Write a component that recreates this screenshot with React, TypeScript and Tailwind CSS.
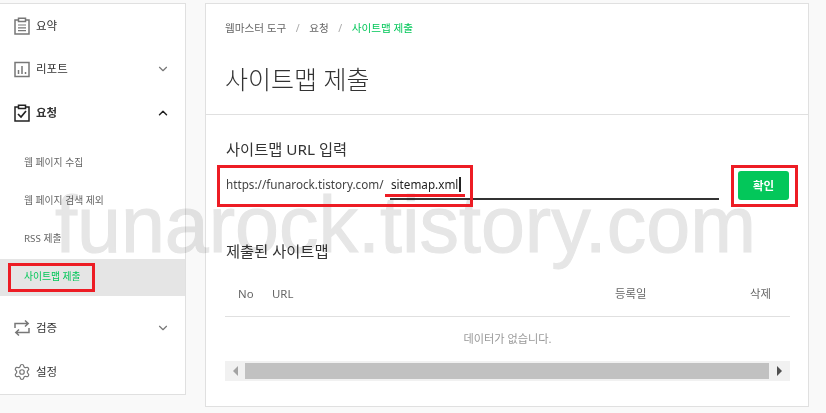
import { ChevronDown, ChevronUp, Settings } from 'lucide-react';

const ClipIcon = ({ className, check = false }: { className?: string; check?: boolean }) => (
  <svg viewBox="0 0 18 18" fill="none" stroke="currentColor" strokeWidth="1.5" className={className}>
    <path d="M5.5 3H2v14h14V3h-3.5" />
    <path d="M5.5 1.2h7v3.3h-7z" />
    {check ? <path d="M5 10l3 3 5-6" strokeWidth="1.7" /> : <path d="M5 8h8M5 10.8h8M5 13.6h8" strokeWidth="1.2" />}
  </svg>
);

const ChartIcon = ({ className }: { className?: string }) => (
  <svg viewBox="0 0 18 18" fill="none" stroke="currentColor" strokeWidth="1.5" className={className}>
    <rect x="2" y="2.5" width="14" height="14" />
    <path d="M5.5 14V10M9 14V6M12.5 14v-2" />
  </svg>
);

const RepeatIcon = ({ className }: { className?: string }) => (
  <svg viewBox="0 0 18 18" fill="none" stroke="currentColor" strokeWidth="1.5" className={className}>
    <path d="M2 9V4.5h13M12 1.5l3.2 3-3.2 3" />
    <path d="M16 9v4.5H3M6 10.5l-3.2 3 3.2 3" />
  </svg>
);

const SubItem = ({ label, active = false }: { label: string; active?: boolean }) => (
  <div className="h-[38px] flex items-center">
    <div className={`w-full h-[37px] flex items-center pl-[24px] text-[9.8px] ${active ? 'bg-[#e5e5e5] text-[#03c75a]' : 'text-[#666666]'}`}>
      {label}
    </div>
  </div>
);

export default function App() {
  return (
    <div className="relative w-[826px] h-[413px] overflow-hidden bg-[#f9f9f9] text-[#333333] [font-family:'Noto_Sans','Noto_Sans_CJK_KR',sans-serif] flex items-start pt-[3px]">

      {/* Sidebar */}
      <div className="w-[186px] h-[392px] bg-white border border-l-0 border-[#e0e0e0] shrink-0">
        <div className="h-[43px] flex items-center pl-[13px] gap-[5px] text-[11.5px]">
          <ClipIcon className="w-[18px] h-[18px] text-[#777777]" />
          <span>요약</span>
        </div>
        <div className="h-[44px] flex items-center pl-[13px] pr-[15px] gap-[5px] text-[11.5px]">
          <ChartIcon className="w-[18px] h-[18px] text-[#777777]" />
          <span className="flex-1">리포트</span>
          <ChevronDown className="w-[14px] h-[14px] text-[#777777]" />
        </div>
        <div className="h-[44px] flex items-center pl-[13px] pr-[15px] gap-[5px] text-[11.5px] font-bold">
          <ClipIcon check className="w-[18px] h-[18px] text-[#222222]" />
          <span className="flex-1">요청</span>
          <ChevronUp className="w-[14px] h-[14px] text-[#222222]" strokeWidth={2.5} />
        </div>
        <div className="pt-[9px] pb-[10px]">
          <SubItem label="웹 페이지 수집" />
          <SubItem label="웹 페이지 검색 제외" />
          <SubItem label="RSS 제출" />
          <SubItem label="사이트맵 제출" active />
        </div>
        <div className="h-[44px] flex items-center pl-[13px] pr-[15px] gap-[5px] text-[11.5px]">
          <RepeatIcon className="w-[18px] h-[18px] text-[#777777]" />
          <span className="flex-1">검증</span>
          <ChevronDown className="w-[14px] h-[14px] text-[#777777]" />
        </div>
        <div className="h-[44px] flex items-center pl-[13px] gap-[5px] text-[11.5px]">
          <Settings className="w-[18px] h-[18px] text-[#777777]" strokeWidth={1.6} />
          <span>설정</span>
        </div>
      </div>

      {/* Main panel */}
      <div className="ml-[19px] w-[604px] h-[404px] bg-white border border-[#e0e0e0] shrink-0">
        <div className="h-[111px] border-b border-[#e0e0e0] px-[19px] pt-[16px]">
          <div className="flex items-center h-[18px] text-[10.6px] text-[#666666]">
            <span>웹마스터 도구</span>
            <span className="mx-[9.5px] text-[#aaaaaa]">/</span>
            <span>요청</span>
            <span className="mx-[9.5px] text-[#aaaaaa]">/</span>
            <span className="text-[#03c75a]">사이트맵 제출</span>
          </div>
          <h1 className="mt-[23px] text-[25px] leading-[36px] font-light text-[#333333]">사이트맵 제출</h1>
        </div>

        <div className="px-[19px] pt-[23px]">
          <div className="pl-px text-[15.3px] leading-[22px]">사이트맵 URL 입력</div>
          <div className="flex items-start mt-[8px]">
            <div className="flex w-[496px] h-[32px] text-[11.7px]">
              <div className="w-[165px] pt-[3px] pl-px border-b-2 border-transparent flex items-center text-[#444444]">https://funarock.tistory.com/</div>
              <div className="flex-1 pt-[3px] pl-px border-b-2 border-[#333333] flex items-center text-[#222222]">
                <span>sitemap.xml</span>
                <span className="ml-px w-[2px] h-[15px] bg-[#222222]" />
              </div>
            </div>
            <button className="ml-[19px] w-[51px] h-[29px] mt-[3px] rounded-[3px] bg-[#03c75a] text-white text-[11.5px] font-bold">확인</button>
          </div>

          <div className="pl-px mt-[40px] text-[15.3px] leading-[22px]">제출된 사이트맵</div>

          <div className="mt-[10px] w-[565px]">
            <div className="h-[45px] border-b border-[#e0e0e0] flex items-center text-[11.4px] text-[#666666]">
              <span className="ml-[13px] w-[34px]">No</span>
              <span className="flex-1">URL</span>
              <span className="w-[135px]">등록일</span>
              <span className="w-[40px]">삭제</span>
            </div>
            <div className="h-[44px] flex items-center justify-center text-[11.2px] text-[#999999]">데이터가 없습니다.</div>
            <div className="h-[20px] bg-[#f1f1f1] flex items-center">
              <div className="w-[20px] flex justify-center">
                <div className="border-y-[5px] border-y-transparent border-r-[5px] border-r-[#a3a3a3]" />
              </div>
              <div className="w-[524px] h-[16px] bg-[#c1c1c1]" />
              <div className="w-[21px] flex justify-center">
                <div className="border-y-[5px] border-y-transparent border-l-[5px] border-l-[#505050]" />
              </div>
            </div>
          </div>
        </div>
      </div>

      {/* Watermark and red annotations lie over the page */}
      <div className="absolute left-[55px] top-[180px] text-[79px] leading-[90px] whitespace-nowrap text-[#e6e6e6] [-webkit-text-stroke:1px_#e6e6e6] mix-blend-multiply pointer-events-none [font-family:'Liberation_Sans',sans-serif]">funarock.tistory.com</div>
      <div className="absolute left-[8px] top-[263px] w-[87px] h-[29px] border-[3px] border-[#ed1c24]" />
      <div className="absolute left-[217px] top-[165px] w-[256px] h-[42px] border-[3px] border-[#ed1c24]" />
      <div className="absolute left-[385px] top-[194px] w-[80px] h-[3px] bg-[#ed1c24]" />
      <div className="absolute left-[731px] top-[165px] w-[67px] h-[42px] border-[3px] border-[#ed1c24]" />
    </div>
  );
}
